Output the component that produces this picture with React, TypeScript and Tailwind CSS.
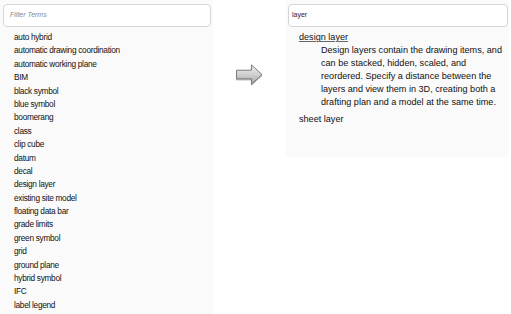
import React from "react";

const terms = [
  "auto hybrid",
  "automatic drawing coordination",
  "automatic working plane",
  "BIM",
  "black symbol",
  "blue symbol",
  "boomerang",
  "class",
  "clip cube",
  "datum",
  "decal",
  "design layer",
  "existing site model",
  "floating data bar",
  "grade limits",
  "green symbol",
  "grid",
  "ground plane",
  "hybrid symbol",
  "IFC",
  "label legend",
];

export default function App() {
  return (
    <div
      className="flex w-[511px] h-[314px] overflow-hidden bg-white text-[#111]"
      style={{ fontFamily: '"Liberation Sans", Arial, sans-serif' }}
    >
      <div className="w-[213px] h-[314px] bg-[#fafafa] pt-[4px] px-[3px] flex flex-col shrink-0">
        <div className="h-[23px] w-[208px] border border-[#d6d6d6] rounded-[4px] bg-white flex items-center pl-[6px]">
          <span className="text-[7px] italic text-[#888]">Filter Terms</span>
        </div>
        <div className="flex flex-col pl-[11px] pt-[4px]">
          {terms.map((t) => (
            <div key={t} className="h-[13.4px] leading-[13.4px] text-[8.3px] tracking-[-0.3px]">
              {t}
            </div>
          ))}
        </div>
      </div>
      <div className="w-[73px] flex shrink-0 pt-[63px] pl-[22px]">
        <svg width="31" height="25" viewBox="0 0 32 26">
          <defs>
            <linearGradient id="ag" x1="0" y1="0" x2="0" y2="1">
              <stop offset="0" stopColor="#f2f2f2" />
              <stop offset="0.5" stopColor="#d0d0d0" />
              <stop offset="1" stopColor="#a8a8a8" />
            </linearGradient>
            <filter id="sh" x="-20%" y="-20%" width="140%" height="140%">
              <feGaussianBlur in="SourceAlpha" stdDeviation="0.8" />
              <feOffset dx="0.5" dy="0.8" />
              <feComponentTransfer>
                <feFuncA type="linear" slope="0.35" />
              </feComponentTransfer>
              <feMerge>
                <feMergeNode />
                <feMergeNode in="SourceGraphic" />
              </feMerge>
            </filter>
          </defs>
          <path
            d="M1.5 7.5 H17 V2 L28 12 L17 22 V16.5 H1.5 Z"
            fill="url(#ag)"
            stroke="#777"
            strokeWidth="1"
            strokeLinejoin="round"
            filter="url(#sh)"
          />
        </svg>
      </div>
      <div className="w-[223px] h-[157px] bg-[#fafafa] pt-[4px] px-[2px] flex flex-col shrink-0">
        <div className="h-[23px] w-[220px] border border-[#d6d6d6] rounded-[4px] bg-white flex items-center pl-[3px]">
          <span className="text-[7px] text-[#3a1030]">layer</span>
        </div>
        <div className="pl-[11px] pt-[4px] text-[9.1px] leading-[13px]">
          <div className="underline decoration-[#666]">design layer</div>
          <div className="pl-[22px]">
            Design layers contain the drawing items, and can be stacked, hidden, scaled, and
            reordered. Specify a distance between the layers and view them in 3D, creating both a
            drafting plan and a model at the same time.
          </div>
          <div className="mt-[4px]">sheet layer</div>
        </div>
      </div>
    </div>
  );
}
